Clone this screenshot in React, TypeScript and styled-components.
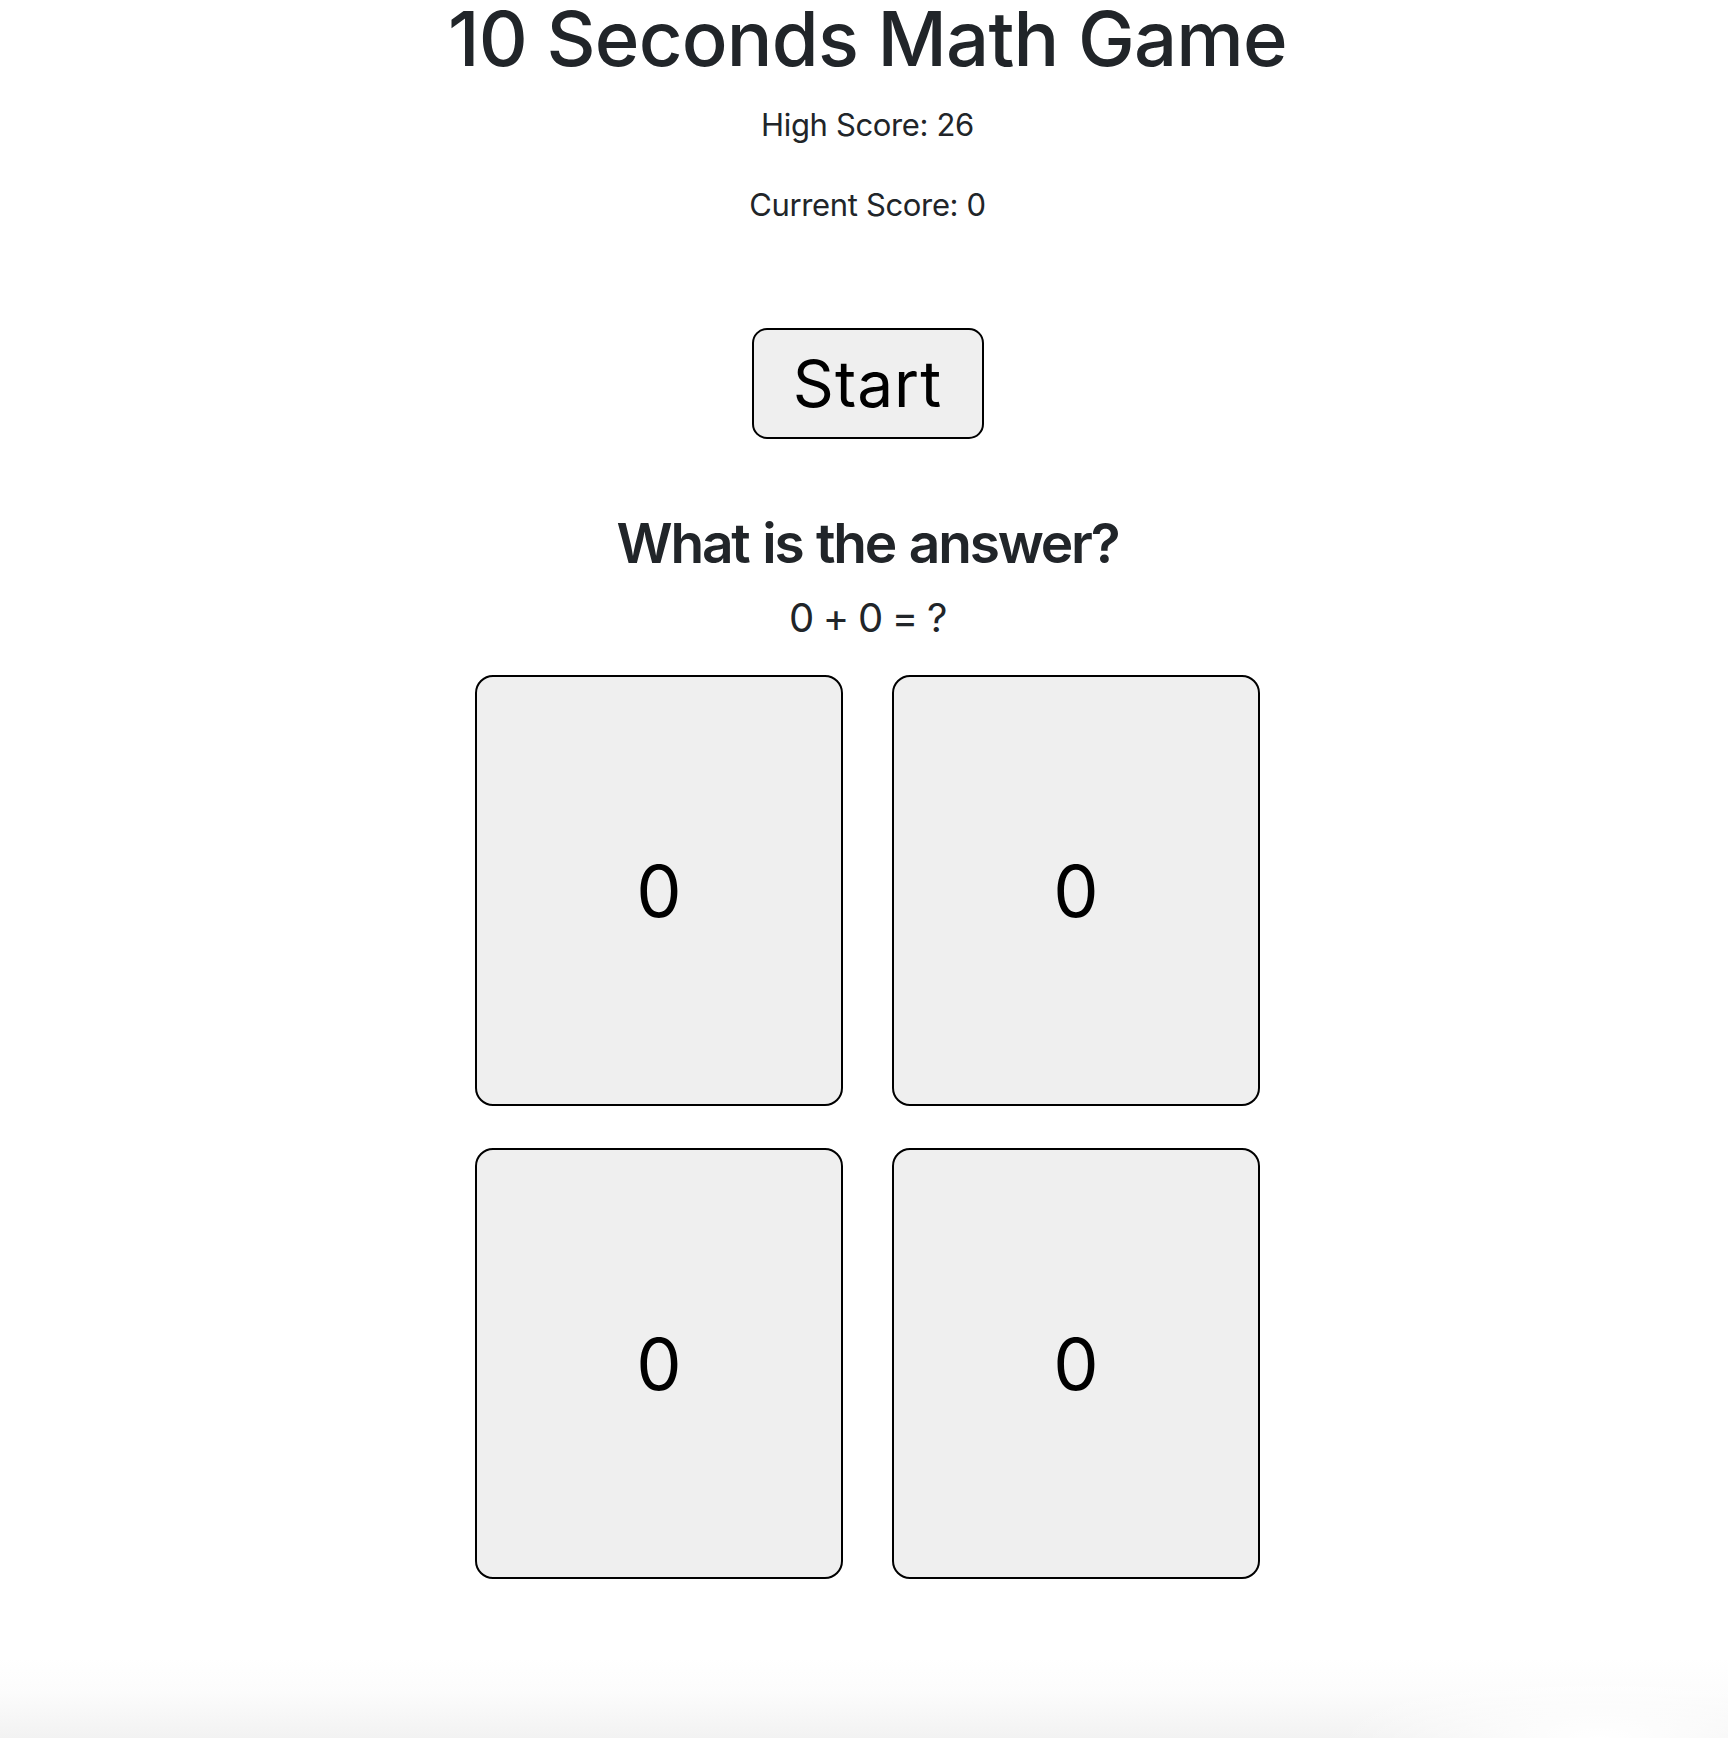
import React from "react";
import styled, { createGlobalStyle } from "styled-components";

const GlobalStyle = createGlobalStyle`
  html, body {
    margin: 0;
    padding: 0;
    min-height: 100%;
    height: 100%;
  }
  body {
    font-family: Inter, "Noto Sans", "Liberation Sans", sans-serif;
    color: #212529;
    background:
      radial-gradient(ellipse 260px 70px at 1600px 100%, rgba(255,255,255,1) 0%, rgba(255,255,255,0) 100%),
      linear-gradient(to bottom, #ffffff 0, #ffffff calc(100% - 80px), #fcfcfc calc(100% - 45px), #f2f2f2 100%);
  }
`;

const Page = styled.main`
  display: flex;
  flex-direction: column;
  align-items: center;
  padding-left: 7px;
  padding-bottom: 160px;
`;

const Title = styled.h1`
  margin: 0;
  font-size: 76px;
  line-height: 76px;
  font-weight: 500;
  letter-spacing: -0.8px;
`;

const Score = styled.p<{ $gap: number }>`
  margin: ${(p) => p.$gap}px 0 0;
  font-size: 31px;
  line-height: 46px;
  font-weight: 400;
  letter-spacing: -0.35px;
`;

const StartButton = styled.button`
  margin-top: 100px;
  width: 232px;
  padding: 17px 0 16px;
  box-sizing: border-box;
  border: 2px solid #000;
  border-radius: 15px;
  background: #efefef;
  color: #000;
  font-family: Inter, "Noto Sans", sans-serif;
  font-size: 64px;
  line-height: 74px;
  font-weight: 400;
  letter-spacing: 1px;
  cursor: pointer;
`;

const Question = styled.h2`
  margin: 69px 0 0;
  font-size: 55px;
  line-height: 70px;
  font-weight: 600;
  letter-spacing: -2.2px;
  word-spacing: 2px;
`;

const Equation = styled.p`
  margin: 16px 0 0;
  font-size: 40px;
  line-height: 48px;
  font-weight: 400;
  letter-spacing: -1.3px;
`;

const Grid = styled.div`
  margin-top: 33px;
  display: grid;
  grid-template-columns: repeat(2, 368px);
  grid-auto-rows: 431px;
  column-gap: 49px;
  row-gap: 42px;
`;

const AnswerButton = styled.button`
  box-sizing: border-box;
  display: flex;
  align-items: center;
  justify-content: center;
  padding: 0;
  border: 2px solid #000;
  border-radius: 18px;
  background: #efefef;
  color: #000;
  font-family: Inter, "Noto Sans", sans-serif;
  font-size: 72px;
  font-weight: 400;
  cursor: pointer;
`;

export default function App() {
  const answers = [0, 0, 0, 0];
  return (
    <>
      <GlobalStyle />
      <Page>
        <Title>10 Seconds Math Game</Title>
        <Score $gap={26}>High Score: 26</Score>
        <Score $gap={34}>Current Score: 0</Score>
        <StartButton>Start</StartButton>
        <Question>What is the answer?</Question>
        <Equation>0 + 0 = ?</Equation>
        <Grid>
          {answers.map((a, i) => (
            <AnswerButton key={i}>{a}</AnswerButton>
          ))}
        </Grid>
      </Page>
    </>
  );
}
